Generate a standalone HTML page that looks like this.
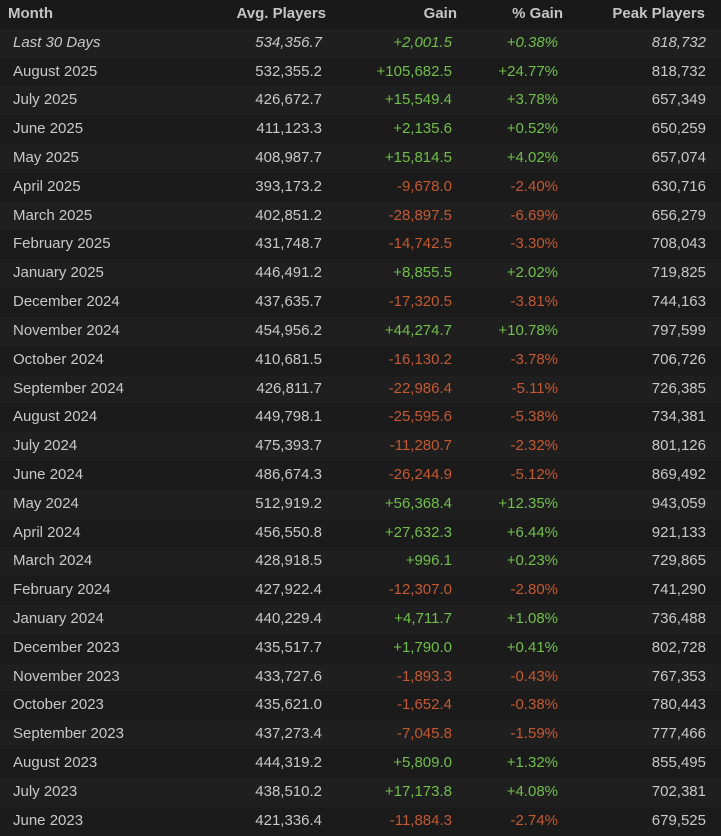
<!DOCTYPE html><html><head><style>
body{margin:0;background:#1b1b1b;width:721px;height:836px;overflow:hidden;font-family:"Liberation Sans",sans-serif;font-size:15px;color:#c8c8c8}
.r{position:absolute;left:0;width:721px;height:28.8px;line-height:28.8px}
.r:nth-child(even){background:#1f1f1f}
.r span{position:absolute;white-space:nowrap}
.m{left:13px}.a{right:399px}.g{right:269px}.p{right:163px}.k{right:15px}
.h{font-weight:bold;color:#c4c4c4;background:#191919!important}
.h .m{left:8px}.h .a{right:395px}.h .g{right:264px}.h .p{right:158px}.h .k{right:16px}
.u{color:#6fbf49}.d{color:#c4582f}
.i{font-style:italic}
</style></head><body>
<div id="t"></div>
<script>
const rows=`Last 30 Days|534,356.7|+2,001.5|+0.38%|818,732
August 2025|532,355.2|+105,682.5|+24.77%|818,732
July 2025|426,672.7|+15,549.4|+3.78%|657,349
June 2025|411,123.3|+2,135.6|+0.52%|650,259
May 2025|408,987.7|+15,814.5|+4.02%|657,074
April 2025|393,173.2|-9,678.0|-2.40%|630,716
March 2025|402,851.2|-28,897.5|-6.69%|656,279
February 2025|431,748.7|-14,742.5|-3.30%|708,043
January 2025|446,491.2|+8,855.5|+2.02%|719,825
December 2024|437,635.7|-17,320.5|-3.81%|744,163
November 2024|454,956.2|+44,274.7|+10.78%|797,599
October 2024|410,681.5|-16,130.2|-3.78%|706,726
September 2024|426,811.7|-22,986.4|-5.11%|726,385
August 2024|449,798.1|-25,595.6|-5.38%|734,381
July 2024|475,393.7|-11,280.7|-2.32%|801,126
June 2024|486,674.3|-26,244.9|-5.12%|869,492
May 2024|512,919.2|+56,368.4|+12.35%|943,059
April 2024|456,550.8|+27,632.3|+6.44%|921,133
March 2024|428,918.5|+996.1|+0.23%|729,865
February 2024|427,922.4|-12,307.0|-2.80%|741,290
January 2024|440,229.4|+4,711.7|+1.08%|736,488
December 2023|435,517.7|+1,790.0|+0.41%|802,728
November 2023|433,727.6|-1,893.3|-0.43%|767,353
October 2023|435,621.0|-1,652.4|-0.38%|780,443
September 2023|437,273.4|-7,045.8|-1.59%|777,466
August 2023|444,319.2|+5,809.0|+1.32%|855,495
July 2023|438,510.2|+17,173.8|+4.08%|702,381
June 2023|421,336.4|-11,884.3|-2.74%|679,525`.split('\n');
let h='<div class="r h" style="top:0"><span class="m">Month</span><span class="a">Avg. Players</span><span class="g">Gain</span><span class="p">% Gain</span><span class="k">Peak Players</span></div>';
rows.forEach((l,i)=>{const c=l.split('|');const cl=c[2][0]=='+'?'u':'d';const it=i==0?' i':'';
h+=`<div class="r" style="top:${(28.8+28.81*i).toFixed(2)}px"><span class="m${it}">${c[0]}</span><span class="a${it}">${c[1]}</span><span class="g ${cl}${it}">${c[2]}</span><span class="p ${cl}${it}">${c[3]}</span><span class="k${it}">${c[4]}</span></div>`});
document.getElementById('t').innerHTML=h;
</script>
</body></html>
